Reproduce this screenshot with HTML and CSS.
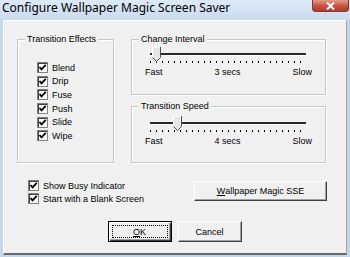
FILE: index.html
```html
<!DOCTYPE html>
<html lang="en">
<head>
    <meta charset="UTF-8">
    <title>Configure Wallpaper Magic Screen Saver</title>
    <link rel="stylesheet" href="styles.css">
</head>
<body>
    <div class="window">
        <div class="titlebar">
            <span class="title">Configure Wallpaper Magic Screen Saver</span>
            <button class="close" aria-label="Close">
                <svg width="11" height="8" viewBox="0 0 11 8"><path d="M2 0.5 L9 7.5 M9 0.5 L2 7.5" stroke="#fff" stroke-width="2"/></svg>
            </button>
        </div>
        <div class="client">
            <div class="top">
                <div class="group effects">
                    <span class="group-title">Transition Effects</span>
                    <div class="check-list">
                        <label class="check"><span class="box"><svg width="9" height="9" viewBox="0 0 9 9"><path d="M1.5 4 L3.5 6.3 L7.8 1.8" fill="none" stroke="#000" stroke-width="1.8"/></svg></span>Blend</label>
                        <label class="check"><span class="box"><svg width="9" height="9" viewBox="0 0 9 9"><path d="M1.5 4 L3.5 6.3 L7.8 1.8" fill="none" stroke="#000" stroke-width="1.8"/></svg></span>Drip</label>
                        <label class="check"><span class="box"><svg width="9" height="9" viewBox="0 0 9 9"><path d="M1.5 4 L3.5 6.3 L7.8 1.8" fill="none" stroke="#000" stroke-width="1.8"/></svg></span>Fuse</label>
                        <label class="check"><span class="box"><svg width="9" height="9" viewBox="0 0 9 9"><path d="M1.5 4 L3.5 6.3 L7.8 1.8" fill="none" stroke="#000" stroke-width="1.8"/></svg></span>Push</label>
                        <label class="check"><span class="box"><svg width="9" height="9" viewBox="0 0 9 9"><path d="M1.5 4 L3.5 6.3 L7.8 1.8" fill="none" stroke="#000" stroke-width="1.8"/></svg></span>Slide</label>
                        <label class="check"><span class="box"><svg width="9" height="9" viewBox="0 0 9 9"><path d="M1.5 4 L3.5 6.3 L7.8 1.8" fill="none" stroke="#000" stroke-width="1.8"/></svg></span>Wipe</label>
                    </div>
                </div>
                <div class="right-col">
                    <div class="group slider-group interval">
                        <span class="group-title">Change Interval</span>
                        <div class="slider">
                            <div class="track"></div>
                            <svg class="thumb" style="left: 2px" width="9" height="15" viewBox="0 0 9 15"><path d="M0.5 0.5 H8.5 V10.5 L4.5 14.5 L0.5 10.5 Z" fill="#e6e6e6"/><path d="M0.5 10.5 V0.5 H8" fill="none" stroke="#fff"/><path d="M8.5 0 V10.5 L4.5 14.5 L0.5 10.5" fill="none" stroke="#505050"/></svg>
                        </div>
                        <div class="ticks"></div>
                        <div class="scale"><span>Fast</span><span>3 secs</span><span>Slow</span></div>
                    </div>
                    <div class="group slider-group speed">
                        <span class="group-title">Transition Speed</span>
                        <div class="slider">
                            <div class="track"></div>
                            <svg class="thumb" style="left: 23px" width="9" height="15" viewBox="0 0 9 15"><path d="M0.5 0.5 H8.5 V10.5 L4.5 14.5 L0.5 10.5 Z" fill="#e6e6e6"/><path d="M0.5 10.5 V0.5 H8" fill="none" stroke="#fff"/><path d="M8.5 0 V10.5 L4.5 14.5 L0.5 10.5" fill="none" stroke="#505050"/></svg>
                        </div>
                        <div class="ticks"></div>
                        <div class="scale"><span>Fast</span><span>4 secs</span><span>Slow</span></div>
                    </div>
                </div>
            </div>
            <div class="options">
                <div class="option-list">
                    <label class="check"><span class="box"><svg width="9" height="9" viewBox="0 0 9 9"><path d="M1.5 4 L3.5 6.3 L7.8 1.8" fill="none" stroke="#000" stroke-width="1.8"/></svg></span>Show Busy Indicator</label>
                    <label class="check"><span class="box"><svg width="9" height="9" viewBox="0 0 9 9"><path d="M1.5 4 L3.5 6.3 L7.8 1.8" fill="none" stroke="#000" stroke-width="1.8"/></svg></span>Start with a Blank Screen</label>
                </div>
                <button class="btn sse"><u>W</u>allpaper Magic SSE</button>
            </div>
            <div class="actions">
                <button class="btn default"><span class="focus"><u>O</u>K</span></button>
                <button class="btn">Cancel</button>
            </div>
        </div>
    </div>
</body>
</html>
```

FILE: styles.css
```css
* {
    box-sizing: border-box;
    margin: 0;
    padding: 0;
}

body {
    width: 350px;
    height: 257px;
    overflow: hidden;
    font-family: "Liberation Sans", Arial, sans-serif;
    font-size: 9px;
    color: #000;
}

.window {
    height: 257px;
    display: flex;
    flex-direction: column;
    background: #c3d6ec;
    padding: 0 3px 2px 3px;
}

.titlebar {
    height: 20px;
    flex-shrink: 0;
    display: flex;
    justify-content: space-between;
    align-items: flex-start;
    margin: 0 -3px;
    background: linear-gradient(#dde9f6, #c9dbef);
}

.title {
    font-family: "Noto Sans", sans-serif;
    font-size: 12px;
    line-height: 16px;
    padding-left: 2px;
    color: #000;
}

.close {
    width: 37px;
    height: 12px;
    margin-right: 1px;
    border: 1px solid #7d3a32;
    border-top: none;
    border-radius: 0 0 4px 4px;
    background: linear-gradient(#e59b8a, #c8503c 55%, #b53a27);
    display: flex;
    align-items: center;
    justify-content: center;
}

.client {
    flex: 1;
    background: #f0f0f0;
    border-top: 1px solid #fff;
    border-left: 1px solid #fff;
    border-right: 1px solid #a0a0a0;
    border-bottom: 2px solid #6a6a6a;
    padding: 18px 0 0 13px;
}

.top {
    display: flex;
    gap: 17px;
    width: 309px;
}

.group {
    border: 1px solid #c8c8c8;
    box-shadow: 1px 1px 0 #fff, inset 1px 1px 0 #fff;
}

.group-title {
    display: table;
    margin: -7px 0 0 7px;
    padding: 0 2px;
    line-height: 13px;
    background: #f0f0f0;
}

.effects {
    width: 97px;
    height: 124px;
}

.check-list {
    padding: 15px 0 0 19px;
    display: flex;
    flex-direction: column;
}

.check {
    display: flex;
    align-items: center;
    gap: 4px;
    height: 13.6px;
}

.box {
    width: 11px;
    height: 11px;
    flex-shrink: 0;
    background: #fff;
    border: 1px solid #808080;
    box-shadow: inset 1px 1px 0 #404040;
    display: flex;
    align-items: center;
    justify-content: center;
}

.right-col {
    width: 195px;
    display: flex;
    flex-direction: column;
    gap: 11px;
}

.interval {
    height: 56px;
}

.speed {
    height: 57px;
}

.slider-group {
    padding: 0 19px 0 18px;
}

.slider-group .group-title {
    margin-left: -11px;
}

.slider {
    position: relative;
    height: 15px;
    margin-top: 1px;
    display: flex;
    align-items: center;
}

.speed .slider {
    margin-top: 3px;
}

.track {
    width: 100%;
    height: 3px;
    background: #2a2a2a;
    border-bottom: 1px solid #fff;
}

.thumb {
    position: absolute;
    top: 0;
}

.ticks {
    height: 2px;
    margin-top: -1px;
    background: repeating-linear-gradient(90deg, #000 0 1px, transparent 1px 6px);
}

.scale {
    display: flex;
    justify-content: space-between;
    margin: 4px -6px 0 -5px;
    line-height: 11px;
}

.options {
    display: flex;
    align-items: flex-start;
    width: 310px;
    margin-top: 16px;
}

.option-list {
    padding-left: 11px;
    display: flex;
    flex-direction: column;
}

.option-list .check {
    height: 13px;
}

.btn {
    font-family: "Liberation Sans", Arial, sans-serif;
    font-size: 9px;
    color: #000;
    background: #f0f0f0;
    border: 1px solid;
    border-color: #fff #404040 #404040 #fff;
    box-shadow: inset -1px -1px 0 #a0a0a0;
    height: 21px;
    width: 64px;
    display: flex;
    align-items: center;
    justify-content: center;
}

.sse {
    width: 133px;
    height: 20px;
    margin: 2px 0 0 auto;
}

.actions {
    display: flex;
    justify-content: center;
    gap: 6px;
    margin: 16px 0 0 -14px;
}

.default {
    border: 1px solid #000;
    box-shadow: inset 1px 1px 0 #fff, inset -1px -1px 0 #404040, inset -2px -2px 0 #a0a0a0;
    padding: 3px;
}

.focus {
    flex: 1;
    align-self: stretch;
    display: flex;
    align-items: center;
    justify-content: center;
    border: 1px dotted #000;
}
```
